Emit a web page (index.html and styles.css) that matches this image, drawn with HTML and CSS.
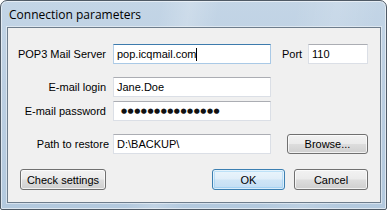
FILE: index.html
```html
<!DOCTYPE html>
<html>
<head>
<meta charset="utf-8">
<link rel="stylesheet" href="styles.css">
</head>
<body>
<div class="window">
  <div class="titlebar"><span class="title">Connection parameters</span></div>
  <div class="client">
    <div class="row row-server">
      <div class="lbl">POP3 Mail Server</div>
      <div class="field focused"><span>pop.icqmail.com</span><span class="caret"></span></div>
      <div class="lbl-port">Port</div>
      <div class="field port">110</div>
    </div>
    <div class="row row-login">
      <div class="lbl">E-mail login</div>
      <div class="field">Jane.Doe</div>
    </div>
    <div class="row row-pass">
      <div class="lbl">E-mail password</div>
      <div class="field pass">●●●●●●●●●●●●●●●</div>
    </div>
    <div class="row row-path">
      <div class="lbl lbl-path">Path to restore</div>
      <div class="field">D:\BACKUP\</div>
      <div class="btn browse">Browse...</div>
    </div>
    <div class="actions">
      <div class="btn check">Check settings</div>
      <div class="btn ok">OK</div>
      <div class="btn cancel">Cancel</div>
    </div>
  </div>
</div>
</body>
</html>
```

FILE: styles.css
```css
html, body {
  margin: 0;
  padding: 0;
  background: #ffffff;
}
.window {
  box-sizing: border-box;
  width: 387px;
  height: 210px;
  border: 1px solid #4f5a66;
  border-radius: 7px 7px 2px 2px;
  background:
    linear-gradient(100deg, rgba(255,255,255,0) 0%, rgba(255,255,255,0) 38%, rgba(255,255,255,0.18) 45%, rgba(255,255,255,0) 52%, rgba(255,255,255,0) 70%, rgba(255,255,255,0.12) 80%, rgba(255,255,255,0) 90%),
    linear-gradient(180deg, #c3d5e6 0%, #bccfe2 40%, #b3c9de 100%);
  box-shadow: inset 0 0 0 1px rgba(255,255,255,0.55);
  padding: 0 5px 6px 6px;
  display: flex;
  flex-direction: column;
}
.titlebar {
  height: 26px;
  flex: none;
  display: flex;
  align-items: center;
  padding-left: 2px;
}
.title {
  font-family: "Open Sans", "Noto Sans", sans-serif;
  font-size: 12px;
  color: #000;
}
.client {
  box-sizing: border-box;
  flex: 1;
  border: 1px solid #6e7d8c;
  box-shadow: 0 0 0 1px rgba(255,255,255,0.45);
  background: #f0f0f0;
  padding: 16px 12px 12px 12px;
  display: flex;
  flex-direction: column;
  font-family: "Liberation Sans", Arial, sans-serif;
  font-size: 11px;
  color: #000;
}
.row {
  display: flex;
  align-items: center;
  height: 20px;
}
.row-login { margin-top: 13px; }
.row-pass { margin-top: 4px; }
.row-path { margin-top: 13px; }
.lbl {
  box-sizing: border-box;
  width: 93px;
  flex: none;
  padding-right: 7px;
  display: flex;
  justify-content: flex-end;
  white-space: nowrap;
}
.lbl-path { padding-right: 4px; }
.field {
  box-sizing: border-box;
  width: 158px;
  height: 20px;
  flex: none;
  background: #fff;
  border: 1px solid #dbdfe6;
  border-top-color: #abadb3;
  padding-left: 3px;
  line-height: 18px;
  white-space: nowrap;
  display: flex;
  align-items: center;
  overflow: hidden;
}
.field.focused {
  border-color: #a9c9e6;
  border-top-color: #3d7bad;
  border-left-color: #b5cfe7;
}
.caret {
  display: inline-block;
  width: 1px;
  height: 13px;
  background: #000;
}
.lbl-port {
  margin-left: 11px;
  width: 26px;
  flex: none;
}
.field.port {
  width: 60px;
}
.field.pass {
  font-family: "DejaVu Sans", sans-serif;
  font-size: 7px;
  letter-spacing: 0.5px;
  padding-left: 7px;
  color: #111;
}
.btn {
  box-sizing: border-box;
  height: 20px;
  border: 1px solid #707070;
  border-radius: 3px;
  background: linear-gradient(180deg, #f2f2f2 0%, #ebebeb 48%, #dddddd 52%, #cfcfcf 100%);
  box-shadow: inset 0 0 0 1px rgba(255,255,255,0.7);
  display: flex;
  align-items: center;
  justify-content: center;
  white-space: nowrap;
  flex: none;
}
.browse {
  width: 81px;
  margin-left: auto;
}
.actions {
  margin-top: 15px;
  display: flex;
  align-items: center;
}
.actions .btn { height: 21px; }
.check { width: 86px; }
.ok {
  width: 73px;
  margin-left: auto;
  border-color: #3c7fb1;
  background: linear-gradient(180deg, #eaf5fc 0%, #e0eef9 48%, #cfe5f6 52%, #c2ddf3 100%);
  box-shadow: inset 0 0 0 1px rgba(255,255,255,0.6), inset 0 0 0 2px rgba(110,190,240,0.35);
}
.cancel {
  width: 74px;
  margin-left: 9px;
}
```
